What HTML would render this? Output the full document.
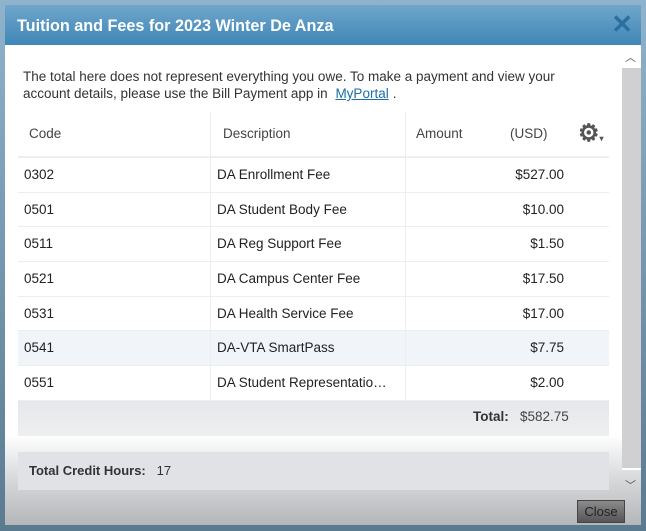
<!DOCTYPE html>
<html><head><style>
body{margin:0;width:646px;height:531px;overflow:hidden;background:linear-gradient(#8fb3cc,#5a7a90);font-family:"Liberation Sans",sans-serif;position:relative}
.dlg{position:absolute;left:5px;top:5px;width:636px;height:520px;background:#fff;overflow:hidden}
.title{position:absolute;left:0;top:0;width:636px;height:40px;background:linear-gradient(#6fa6cb,#3f86b7);color:#fff;font-weight:bold;font-size:16.2px;line-height:42px;padding-left:12px;box-sizing:border-box}
.x{position:absolute;right:8px;top:6px;color:#2a6fa0;font-size:26px;font-weight:bold;line-height:26px}
.sb{position:absolute;left:617px;top:40px;width:19px;height:425px;background:#fff}
.track{position:absolute;left:617px;top:63px;width:19px;height:400px;background:#d0d0d2}
.msg{position:absolute;left:18px;top:63px;font-size:13.5px;color:#333;line-height:17px;width:555px}
.msg a{color:#1a6fa8;text-decoration:underline;padding:0 4px}
.tbl{position:absolute;left:13px;top:107px;width:591px}
.row{height:33.7px;border-bottom:1px solid #eee;position:relative;font-size:13.5px;color:#222;line-height:34px;background:#fff}
.row span{position:absolute}
.c1{left:6px}.c2{left:199px}.c3{right:45px}
.vl{position:absolute;top:0;bottom:0;width:1px;background:#eee}
.hdr{height:44px;line-height:44px;color:#444;border-bottom:2px solid #eee}
.hl{background:#f1f5f9}
.tot{height:35px;background:linear-gradient(#e6e7ea,#eeeff1);font-size:13.5px;line-height:32px;position:relative}
.credit{position:absolute;left:13px;top:447px;width:591px;height:38px;background:#e1e2e5;font-size:13px;line-height:38px;color:#333}
.bot{position:absolute;left:0;top:430px;width:636px;height:90px;background:linear-gradient(rgba(255,255,255,0),#d6d8da 50%,#b4b6b9)}
.close{position:absolute;left:572px;top:495px;width:46px;height:21px;background:linear-gradient(#8b8b8b,#555);border:1px solid #444;color:#222;font-size:13px;line-height:21px;text-align:center}
</style></head><body>
<div class="dlg">
<div class="bot"></div>
<div class="title">Tuition and Fees for 2023 Winter De Anza<span class="x">✕</span></div>
<div class="sb"></div><div class="track"></div>
<div style="position:absolute;left:620px;top:44px;font-size:11px;color:#555">︿</div>
<div style="position:absolute;left:620px;top:472px;font-size:11px;color:#555">﹀</div>
<div class="msg">The total here does not represent everything you owe. To make a payment and view your account details, please use the Bill Payment app in <a>MyPortal</a>.</div>
<div class="tbl">
<div class="row hdr"><span style="left:11px">Code</span><span style="left:205px">Description</span><span style="left:398px">Amount</span><span style="left:492px">(USD)</span><span style="left:560px;font-size:24px;color:#555;font-weight:bold">⚙<small style="font-size:8px">▾</small></span><div class="vl" style="left:192px"></div><div class="vl" style="left:387px"></div></div>
<div class="row"><span class="c1">0302</span><span class="c2">DA Enrollment Fee</span><span class="c3">$527.00</span><div class="vl" style="left:192px"></div><div class="vl" style="left:387px"></div></div>
<div class="row"><span class="c1">0501</span><span class="c2">DA Student Body Fee</span><span class="c3">$10.00</span><div class="vl" style="left:192px"></div><div class="vl" style="left:387px"></div></div>
<div class="row"><span class="c1">0511</span><span class="c2">DA Reg Support Fee</span><span class="c3">$1.50</span><div class="vl" style="left:192px"></div><div class="vl" style="left:387px"></div></div>
<div class="row"><span class="c1">0521</span><span class="c2">DA Campus Center Fee</span><span class="c3">$17.50</span><div class="vl" style="left:192px"></div><div class="vl" style="left:387px"></div></div>
<div class="row"><span class="c1">0531</span><span class="c2">DA Health Service Fee</span><span class="c3">$17.00</span><div class="vl" style="left:192px"></div><div class="vl" style="left:387px"></div></div>
<div class="row hl"><span class="c1">0541</span><span class="c2">DA-VTA SmartPass</span><span class="c3">$7.75</span><div class="vl" style="left:192px"></div><div class="vl" style="left:387px"></div></div>
<div class="row"><span class="c1">0551</span><span class="c2">DA Student Representatio…</span><span class="c3">$2.00</span><div class="vl" style="left:192px"></div><div class="vl" style="left:387px"></div></div>
<div class="tot"><span style="position:absolute;left:455px;font-weight:bold;color:#333">Total:</span><span style="position:absolute;left:502px;color:#444">$582.75</span></div>
</div>
<div class="credit"><b style="margin-left:11px">Total Credit Hours:</b>&nbsp;&nbsp; 17</div>
<div class="close">Close</div>
</div>
</body></html>
